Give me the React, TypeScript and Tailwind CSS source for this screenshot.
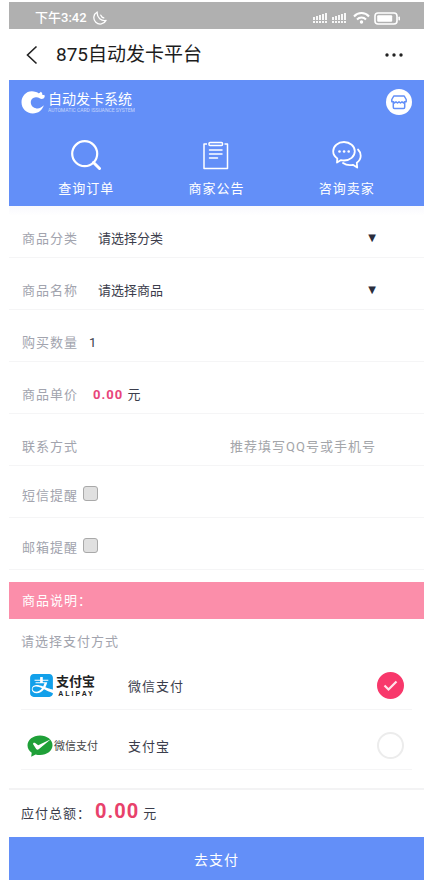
import React, { useState } from 'react';
import { SiAlipay } from 'react-icons/si';

function StatusIcons() {
  return (
    <svg width="90" height="16" viewBox="0 0 90 16" fill="#fff" aria-hidden="true">
      {[0, 19].map(x => (
        <g key={x} opacity="0.9">
          <rect x={x + 1} y="7" width="2" height="3" />
          <rect x={x + 4} y="6" width="2" height="4" />
          <rect x={x + 7} y="5" width="2" height="5" />
          <rect x={x + 10} y="4" width="2" height="6" />
          <rect x={x + 13} y="3" width="2" height="7" />
          <rect x={x + 1} y="11" width="2" height="2" />
          <rect x={x + 4} y="11" width="2" height="2" />
          <rect x={x + 7} y="11" width="2" height="2" />
          <rect x={x + 10} y="11" width="2" height="2" />
          <rect x={x + 13} y="11" width="2" height="2" />
        </g>
      ))}
      <g fill="none" stroke="#fff" strokeWidth="2">
        <path d="M42 6.5a10 10 0 0 1 15 0" />
        <path d="M45 9.5a6.2 6.2 0 0 1 9 0" />
      </g>
      <circle cx="49.5" cy="12" r="1.7" />
      <rect x="63" y="3" width="22" height="11" rx="3" fill="none" stroke="#fff" strokeWidth="1.6" />
      <rect x="65.2" y="5.2" width="15" height="6.6" rx="1" />
      <rect x="86.4" y="6.5" width="1.6" height="4" rx="0.8" />
    </svg>
  );
}

function MoonIcon() {
  return (
    <svg width="14" height="14" viewBox="0 0 14 14" fill="none" stroke="#fff" strokeWidth="1.3" strokeLinejoin="round" strokeLinecap="round" aria-hidden="true">
      <path d="M4.200 1A6.400 6.400 0 1 0 13 9.400C8.500 10.400 3.600 6.600 4.200 1Z" />
      <path d="M7.800 4.200c.5 1.300 1.500 2.300 3 2.600" />
    </svg>
  );
}

function LogoMark() {
  return (
    <svg width="24" height="24" viewBox="0 0 24 24" aria-hidden="true">
      <path
        fill="#fff"
        d="M15 2C7.200-1 .5 4.700.5 12.300c0 6.300 5 11.200 11.300 11.200 5.400 0 9.600-3.300 11-8.200-2.200 2.400-4.600 3.500-7.300 3.100-3.400-.5-5.700-2.900-5.700-5.900 0-2.900 2.100-5 5-5.200 1.600-.1 2.800.3 3.800 1 1.700 1 3.600.7 4.600-.6.700-1 .7-2.100 0-3-.6.4-1.300.4-1.900 0 .1-1.300-.4-2.300-1.600-2.900-.5 1.100-1.300 1.600-2.400 1.400-.4-.6-1.100-1-2.300-1.200Z"
      />
    </svg>
  );
}

function StoreIcon() {
  return (
    <svg width="18" height="18" viewBox="0 0 18 18" fill="none" stroke="#638ff8" strokeWidth="1.500" strokeLinejoin="round" aria-hidden="true">
      <path d="M3.800 3h10.400l2 3.500v2.300h-1.700l-1 1.200-1.500-1.200-1.500 1.200L9 8.800 7.500 10 6 8.800 4.500 10l-1-1.200H1.800V6.500Z" />
      <path d="M3.300 9v5.200c0 .8.400 1.200 1.100 1.200h9.200c.7 0 1.100-.4 1.100-1.200V9" />
    </svg>
  );
}

function SearchIcon() {
  return (
    <svg width="30" height="30" viewBox="0 0 30 30" fill="none" stroke="#fff" aria-hidden="true">
      <circle cx="13.700" cy="13.700" r="12.500" strokeWidth="2.200" />
      <path d="M22.500 22.500l6 6" strokeWidth="3" strokeLinecap="round" />
    </svg>
  );
}

function NoticeIcon() {
  return (
    <svg width="30" height="30" viewBox="0 0 30 30" fill="none" stroke="#fff" strokeWidth="1.500" strokeLinejoin="round" aria-hidden="true">
      <path d="M6 4H3v24.500h23.500V4h-3" />
      <rect x="8" y="2.500" width="13.500" height="3" rx="1" />
      <path d="M8.500 10h12.500M8.500 14h12.500M8.500 18h8" strokeLinecap="round" />
    </svg>
  );
}

function ChatIcon() {
  return (
    <svg width="30" height="30" viewBox="0 0 30 30" fill="none" stroke="#fff" strokeWidth="1.800" strokeLinejoin="round" strokeLinecap="round" aria-hidden="true">
      <path d="M12 2C6 2 1.200 6.100 1.200 11.300c0 3 1.600 5.500 4.100 7.200l-.3 4 4-2.400c1 .3 2 .4 3 .4 6 0 10.800-4.100 10.800-9.200S18 2 12 2Z" />
      <path d="M26 9.500c1.700 1.600 2.700 3.800 2.700 6.300 0 2.900-1.500 5.300-3.900 6.900l.4 4.800-4.300-2.700c-3.800.7-7.300 0-9.900-1.800" />
      <g fill="#fff" stroke="none">
        <circle cx="7.500" cy="11.500" r="1.300" />
        <circle cx="12.100" cy="11.500" r="1.300" />
        <circle cx="16.700" cy="11.500" r="1.300" />
      </g>
    </svg>
  );
}

function AlipayLogo() {
  return (
    <span className="flex items-center gap-[3px]">
      <SiAlipay size={23} color="#12a0ea" aria-hidden="true" />
      <span className="flex flex-col items-center text-[#222]">
        <span className="font-bold leading-4">支付宝</span>
        <span className="pl-0.5 font-['Liberation_Sans',sans-serif] text-[7px] font-bold leading-[7px] tracking-[2px]">ALIPAY</span>
      </span>
    </span>
  );
}

function WechatPayLogo() {
  return (
    <span className="flex items-center gap-px">
      <svg width="26" height="22" viewBox="0 0 26 22" aria-hidden="true">
        <path fill="#1fa038" d="M13 .5C6 .5.500 4.900.500 10.300c0 3.100 1.600 5.700 4.200 7.400L4.200 21.700l4.400-2.200c1.400.4 2.800.6 4.400.6 7 0 12.500-4.400 12.500-9.800S20 .5 13 .5Z" />
        <path fill="#fff" d="M6.200 8.200c.6-.6 1.300-.6 2-.1l3 2.200L23.800 4.200 11.700 14.300c-.9.700-1.900.5-2.500-.4L6.300 9.600c-.300-.500-.400-1-.100-1.400Z" />
      </svg>
      <span className="pt-0.5 text-[11px] leading-4 text-[#444]">微信支付</span>
    </span>
  );
}

const ACTIONS = [
  { id: 'orders', label: '查询订单', Icon: SearchIcon },
  { id: 'notice', label: '商家公告', Icon: NoticeIcon },
  { id: 'contact', label: '咨询卖家', Icon: ChatIcon },
];

const PAYMENTS = [
  { id: 'wxpay', label: '微信支付', Logo: AlipayLogo, pad: 'pl-[9px]' },
  { id: 'alipay', label: '支付宝', Logo: WechatPayLogo, pad: 'pl-[6px]' },
];

interface RowProps {
  label: string;
  htmlFor?: string;
  children: React.ReactNode;
}

function Row({ label, htmlFor, children }: RowProps) {
  return (
    <div className="flex h-[52px] items-start border-b border-[#f5f5f6] pl-[13px] pr-12 pt-[23px] leading-5">
      <label htmlFor={htmlFor} className="shrink-0 tracking-[1px] text-[#a2a4ae]">{label}</label>
      {children}
    </div>
  );
}

function SelectRow({ id, label, placeholder }: { id: string; label: string; placeholder: string }) {
  return (
    <Row label={label} htmlFor={id}>
      <select id={id} className="ml-5 h-5 min-w-0 flex-1 appearance-none bg-transparent leading-5 text-[#3b3d4c] outline-none">
        <option>{placeholder}</option>
      </select>
      <span className="pointer-events-none font-['DejaVu_Sans',sans-serif] text-[10px] leading-[18px] text-[#2b2d3c]" aria-hidden="true">▼</span>
    </Row>
  );
}

function CheckRow({ id, label }: { id: string; label: string }) {
  return (
    <div className="flex h-[52px] items-start border-b border-[#f5f5f6] pl-[13px] pr-12 pt-5 leading-5">
      <label htmlFor={id} className="shrink-0 tracking-[1px] text-[#a2a4ae]">{label}</label>
      <input
        id={id}
        type="checkbox"
        className="ml-[5px] size-[15px] appearance-none rounded-[3px] border border-[#a9a9a9] bg-[#e0e0e0] checked:bg-[#638ff8]"
      />
    </div>
  );
}

export default function App() {
  const [payment, setPayment] = useState('wxpay');
  const [quantity, setQuantity] = useState('1');
  const [contact, setContact] = useState('');

  return (
    <div className="bg-white pb-[3px] pl-[9px] pr-[5px] pt-0.5 font-[Roboto,'Noto_Sans_CJK_SC',sans-serif] text-[13px]">
      <div className="flex h-[27px] items-center justify-between bg-[#b0b0b0] pl-[26px] pr-[22px] pt-1 text-white">
        <div className="flex items-center gap-1.5">
          <span className="pt-px font-medium leading-5">下午3:42</span>
          <MoonIcon />
        </div>
        <StatusIcons />
      </div>

      <header className="flex h-[51px] items-center pl-4 pr-5">
        <button type="button" aria-label="返回">
          <svg width="14" height="20" viewBox="0 0 14 20" fill="none" stroke="#222" strokeWidth="1.600">
            <path d="M11.500 1.500L2.500 10l9 8.500" />
          </svg>
        </button>
        <h1 className="ml-[17px] flex-1 text-[19px] leading-7 text-[#1c1c1c]">875自动发卡平台</h1>
        <button type="button" aria-label="更多">
          <svg width="20" height="6" viewBox="0 0 20 6" fill="#222">
            <circle cx="3" cy="3" r="1.700" />
            <circle cx="10" cy="3" r="1.700" />
            <circle cx="17" cy="3" r="1.700" />
          </svg>
        </button>
      </header>

      <section className="bg-[#638ff8] px-3 pb-[7px] text-white">
        <div className="flex h-11 items-center justify-between">
          <div className="flex items-center gap-[3px]">
            <LogoMark />
            <div className="flex flex-col">
              <span className="text-[14px] leading-[17px]">自动发卡系统</span>
              <span className="whitespace-nowrap text-[5px] leading-[5px] opacity-60">AUTOMATIC CARD ISSUANCE SYSTEM</span>
            </div>
          </div>
          <button type="button" aria-label="店铺" className="grid size-[26px] place-items-center rounded-full bg-white">
            <StoreIcon />
          </button>
        </div>
        <nav className="grid grid-cols-3 pt-4">
          {ACTIONS.map(({ id, label, Icon }) => (
            <button key={id} type="button" className="flex flex-col items-center gap-[9px]">
              <Icon />
              <span className="leading-5 tracking-[1px]">{label}</span>
            </button>
          ))}
        </nav>
      </section>

      <form onSubmit={e => e.preventDefault()}>
        <div className="bg-linear-to-b from-[#f9f9fd] to-white to-[10px]">
          <SelectRow id="category" label="商品分类" placeholder="请选择分类" />
          <SelectRow id="goods" label="商品名称" placeholder="请选择商品" />
          <Row label="购买数量" htmlFor="quantity">
            <input
              id="quantity"
              inputMode="numeric"
              value={quantity}
              onChange={e => setQuantity(e.target.value)}
              className="ml-[11px] h-5 min-w-0 flex-1 text-[#3b3d4c] outline-none"
            />
          </Row>
          <Row label="商品单价">
            <span className="ml-[15px] tracking-[1px] text-[#3b3d4c]">
              <b className="text-[#e8457a]">0.00</b> 元
            </span>
          </Row>
          <Row label="联系方式" htmlFor="contact">
            <input
              id="contact"
              value={contact}
              onChange={e => setContact(e.target.value)}
              placeholder="推荐填写QQ号或手机号"
              className="ml-4 h-5 min-w-0 flex-1 text-right tracking-[1px] text-[#3b3d4c] outline-none placeholder:text-[#a3a5a9]"
            />
          </Row>
          <CheckRow id="sms" label="短信提醒" />
          <CheckRow id="email" label="邮箱提醒" />
        </div>

        <h2 className="mt-3 bg-[#fb8eaa] px-[13px] pb-2 pt-[9px] leading-5 tracking-[1px] text-white">商品说明：</h2>

        <fieldset className="px-3">
          <legend className="h-[31px] pt-[13px] leading-5 tracking-[1px] text-[#a2a4ae]">请选择支付方式</legend>
          {PAYMENTS.map(({ id, label, Logo, pad }) => (
            <label key={id} className="flex h-[60px] items-center border-b border-[#f5f5f6] pr-2 pt-3">
              <span className={`w-[107px] shrink-0 ${pad}`}>
                <Logo />
              </span>
              <span className="flex-1 pt-0.5 leading-5 tracking-[1px] text-[#3b3d4c]">{label}</span>
              <span className="grid size-[27px] place-items-center">
                <input
                  type="radio"
                  name="payment"
                  value={id}
                  checked={payment === id}
                  onChange={() => setPayment(id)}
                  className="col-start-1 row-start-1 size-[27px] appearance-none rounded-full border-2 border-[#ececec] checked:border-[#f8386b] checked:bg-[#f8386b]"
                />
                {payment === id && (
                  <svg className="pointer-events-none col-start-1 row-start-1" width="15" height="12" viewBox="0 0 15 12" fill="none" stroke="#ffe3ea" strokeWidth="2.200" aria-hidden="true">
                    <path d="M1.500 5.500l4 4L13.500 1.500" />
                  </svg>
                )}
              </span>
            </label>
          ))}
        </fieldset>

        <div className="mt-[18px] flex h-[49px] items-baseline border-t-2 border-[#f3f3f4] px-3 pt-[5px] tracking-[1px] text-[#3b3d4c]">
          <span>应付总额：</span>
          <b className="ml-1 text-[20px] leading-8 text-[#e8416b]">0.00</b>
          <span className="ml-1">元</span>
        </div>
        <button type="submit" className="h-[43px] w-full bg-[#638ff8] pt-1 text-[14px] tracking-[1px] text-white">
          去支付
        </button>
      </form>
    </div>
  );
}
